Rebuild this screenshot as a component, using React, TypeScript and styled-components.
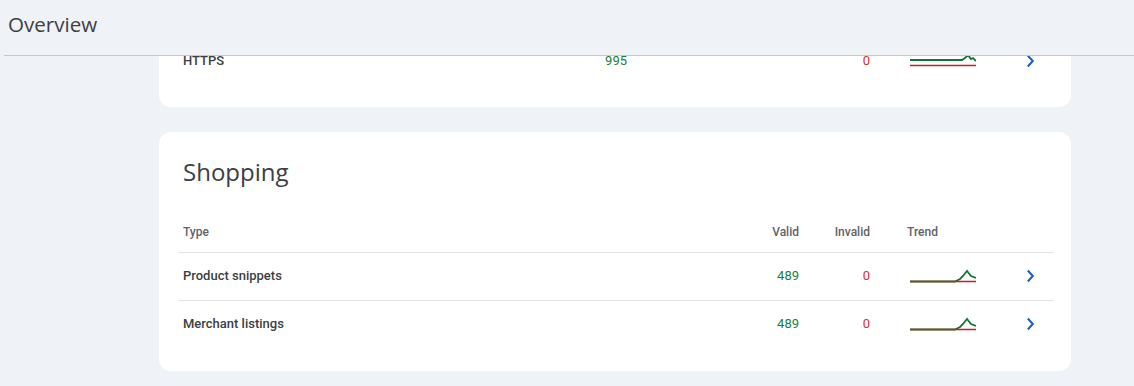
import React from "react";
import styled, { createGlobalStyle } from "styled-components";

const GlobalStyle = createGlobalStyle`
  html, body {
    margin: 0;
    padding: 0;
    background: #eff2f6;
    font-family: Roboto, "Liberation Sans", sans-serif;
    color: #3c4043;
  }
`;

const Page = styled.div`
  width: 1134px;
  height: 386px;
  display: flex;
  flex-direction: column;
  overflow: hidden;
`;

const Header = styled.header`
  flex: 0 0 auto;
  height: 56px;
  box-sizing: border-box;
  margin-left: 4px;
  padding: 10px 0 0 4px;
  border-bottom: 1px solid #c6c8cb;
  position: relative;
  z-index: 1;
  background: #eff2f6;
`;

const PageTitle = styled.h1`
  margin: 0;
  font-family: "Open Sans", "Liberation Sans", sans-serif;
  font-size: 20.6px;
  line-height: 28px;
  font-weight: 400;
  color: #3c4043;
`;

const Scroller = styled.main`
  flex: 1 1 auto;
  overflow: hidden;
  padding-left: 159px;
`;

const Card = styled.section<{ $scrolled?: boolean }>`
  width: 912px;
  box-sizing: border-box;
  background: #fff;
  border-radius: 12px;
  padding: ${(p) => (p.$scrolled ? "0 17px 22px 19px" : "24px 17px 23px 19px")};
  margin-top: ${(p) => (p.$scrolled ? "-18px" : "25px")};
`;

const CardTitle = styled.h2`
  margin: 0 0 24px 5px;
  font-family: "Open Sans", "Liberation Sans", sans-serif;
  font-size: 24px;
  line-height: 32px;
  font-weight: 400;
  color: #3c4043;
`;

const HeadRow = styled.div<{ $cols: string }>`
  display: grid;
  grid-template-columns: ${(p) => p.$cols};
  align-items: center;
  height: 40px;
  border-bottom: 1px solid #e0e2e5;
`;

const Row = styled.div<{ $cols: string; $divider?: boolean }>`
  display: grid;
  grid-template-columns: ${(p) => p.$cols};
  align-items: center;
  height: 45px;
  padding-bottom: 2px;
  border-top: ${(p) => (p.$divider ? "1px solid #e0e2e5" : "none")};
`;

const Cell = styled.div<{ $align?: "left" | "right"; $pad?: number }>`
  padding: 0 5px 0 ${(p) => p.$pad ?? 5}px;
  text-align: ${(p) => p.$align ?? "left"};
  font-size: 13px;
  white-space: nowrap;
`;

const HeadCell = styled(Cell)`
  font-size: 12px;
  font-weight: 500;
  color: #5f6368;
`;

const TypeName = styled(Cell)`
  font-weight: 500;
  color: #3c4043;
`;

const Num = styled(Cell)<{ $kind: "valid" | "invalid" }>`
  color: ${(p) => (p.$kind === "valid" ? "#188038" : "#d93025")};
`;

const Spark = styled.svg`
  display: block;
  margin-left: 3px;
`;

const ChevronCell = styled.div`
  display: flex;
  justify-content: center;
  align-items: center;
`;

const Chevron = () => (
  <svg width="9" height="14" viewBox="0 0 9 14">
    <polyline
      points="1.8,1.5 6.8,7 1.8,12.5"
      fill="none"
      stroke="#1a5cc8"
      strokeWidth="2"
    />
  </svg>
);

const Sparkline = ({ green, red }: { green: string; red: string }) => (
  <Spark width="66" height="16" viewBox="0 0 66 16">
    <path d={green} fill="none" stroke="#137333" strokeWidth="1.8" />
    <path d={red} fill="none" stroke="#c5221f" strokeWidth="1.6" />
  </Spark>
);

const SHOP_COLS = "1fr 80px 71px 131px 48px";
const HTTPS_COLS = "1fr 80px 243px 131px 48px";

const shopGreen = "M0 13.5 L45 13.5 L50 11 L53 8 L57 3 L61 8 L66 10";
const flatRed = "M0 13.5 L66 13.5";

const shopping = [
  { name: "Product snippets", valid: 489, invalid: 0 },
  { name: "Merchant listings", valid: 489, invalid: 0 },
];

export default function App() {
  return (
    <Page>
      <GlobalStyle />
      <Header>
        <PageTitle>Overview</PageTitle>
      </Header>
      <Scroller>
        <Card $scrolled>
          <Row $cols={HTTPS_COLS}>
            <TypeName>HTTPS</TypeName>
            <Num $kind="valid" $align="right">995</Num>
            <Num $kind="invalid" $align="right">0</Num>
            <Cell $pad={32}>
              <Sparkline
                green="M0 7 L52 7 L55 5 L58 2 L61 6 L63 5 L66 8"
                red="M0 12.5 L66 12.5"
              />
            </Cell>
            <ChevronCell>
              <Chevron />
            </ChevronCell>
          </Row>
        </Card>

        <Card>
          <CardTitle>Shopping</CardTitle>
          <HeadRow $cols={SHOP_COLS}>
            <HeadCell>Type</HeadCell>
            <HeadCell $align="right">Valid</HeadCell>
            <HeadCell $align="right">Invalid</HeadCell>
            <HeadCell $pad={32}>Trend</HeadCell>
            <div />
          </HeadRow>
          {shopping.map((item, i) => (
            <Row $cols={SHOP_COLS} $divider={i > 0} key={item.name}>
              <TypeName>{item.name}</TypeName>
              <Num $kind="valid" $align="right">{item.valid}</Num>
              <Num $kind="invalid" $align="right">{item.invalid}</Num>
              <Cell $pad={32}>
                <Sparkline green={shopGreen} red={flatRed} />
              </Cell>
              <ChevronCell>
                <Chevron />
              </ChevronCell>
            </Row>
          ))}
        </Card>
      </Scroller>
    </Page>
  );
}
